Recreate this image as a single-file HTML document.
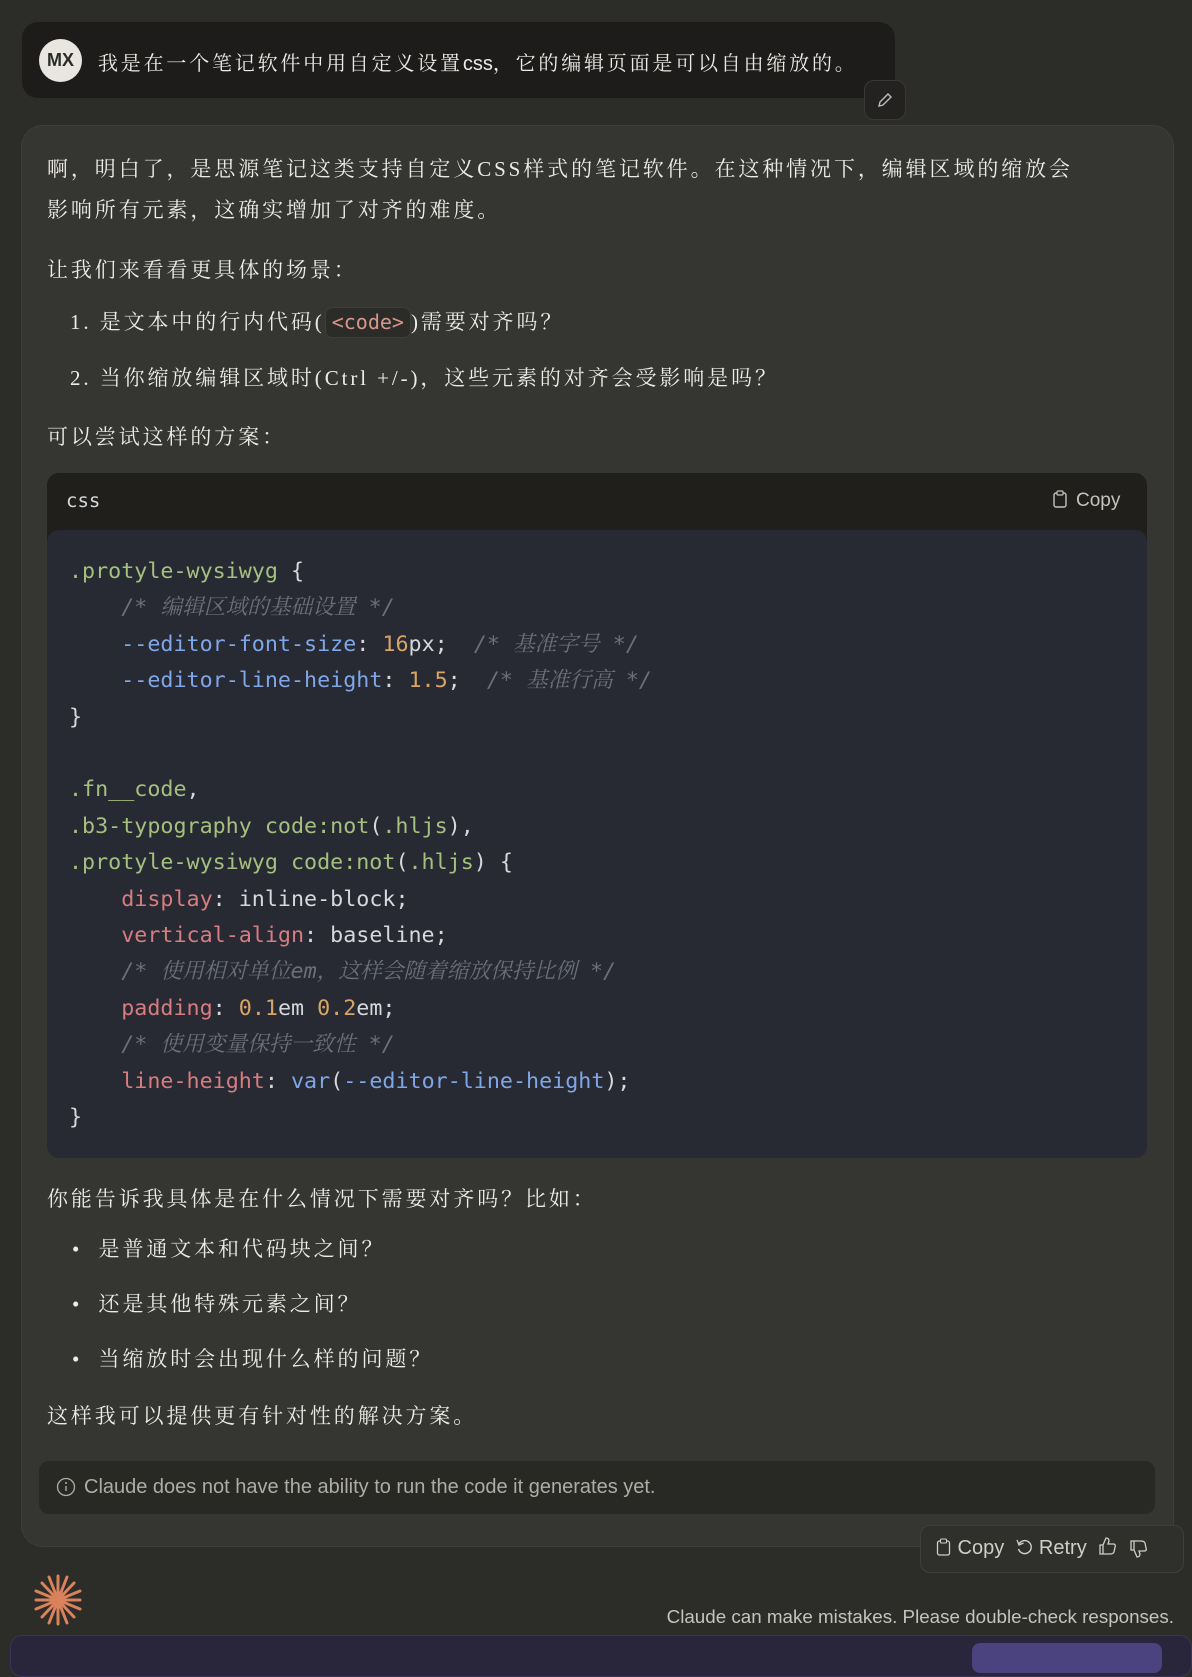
<!DOCTYPE html>
<html><head><meta charset="utf-8"><style>
body{margin:0;width:1192px;height:1650px;overflow:hidden;background:#2c2c29;font-family:"Liberation Serif","Noto Serif CJK SC",serif;color:#ecebe6;position:relative}
.a{position:absolute;white-space:nowrap}
.t{font-size:21px;letter-spacing:2.9px}
.user{position:absolute;left:22px;top:22px;width:873px;height:76px;background:#1d1c1a;border-radius:16px}
.av{position:absolute;left:39px;top:39px;width:43px;height:43px;border-radius:50%;background:#e8e6df;color:#2b2b28;font:bold 18px "Liberation Sans",sans-serif;text-align:center;line-height:43px}
.edit{position:absolute;left:864px;top:80px;width:40px;height:38px;border-radius:10px;background:#232220;border:1px solid #3a3936}
.card{position:absolute;left:21px;top:125px;width:1151px;height:1420px;background:#353532;border:1px solid #3e3e3a;border-radius:22px}
.ch{position:absolute;left:47px;top:473px;width:1100px;height:80px;background:#201f1c;border-radius:12px 12px 0 0}
.cb{position:absolute;left:47px;top:530px;width:1100px;height:628px;background:#282a33;border-radius:12px}
.m{font-family:"DejaVu Sans Mono","Liberation Mono",monospace;font-size:21.7px;color:#d6d8dc}
.m div{white-space:pre}
.g{color:#a4c07f}.b{color:#7fa6e6}.r{color:#d77c7f}.o{color:#d9a466}.c{color:#6b6f78;font-style:italic;font-family:"DejaVu Sans Mono","Noto Serif CJK SC",monospace}
.s{font-family:"Liberation Sans",sans-serif;letter-spacing:0}
</style></head><body>
<div class="user"></div>
<div class="av">MX</div>
<div class="a t" style="left:98px;top:47px;font-size:20px;letter-spacing:2.8px">我是在一个笔记软件中用自定义设置<span class="s">css</span>，它的编辑页面是可以自由缩放的。</div>
<div class="edit"><svg width="40" height="38" viewBox="0 0 40 38"><path d="M14 25 L15 21 L23 13 L26 16 L18 24 Z" fill="none" stroke="#bbb" stroke-width="1.4"/></svg></div>
<div class="card"></div>
<div class="a t" style="left:47px;top:153px">啊，明白了，是思源笔记这类支持自定义CSS样式的笔记软件。在这种情况下，编辑区域的缩放会</div>
<div class="a t" style="left:47px;top:194px">影响所有元素，这确实增加了对齐的难度。</div>
<div class="a t" style="left:47px;top:254px">让我们来看看更具体的场景：</div>
<div class="a t" style="left:70px;top:306px">1. 是文本中的行内代码(<span style="display:inline-block;background:#2b2b28;border:1px solid #3e3e3a;border-radius:7px;padding:0 6px;color:#d9958a;font-family:'DejaVu Sans Mono',monospace;font-size:20px;line-height:29px;letter-spacing:0">&lt;code&gt;</span>)需要对齐吗？</div>
<div class="a t" style="left:70px;top:362px">2. 当你缩放编辑区域时(Ctrl +/-)，这些元素的对齐会受影响是吗？</div>
<div class="a t" style="left:47px;top:421px">可以尝试这样的方案：</div>
<div class="ch"></div><div class="cb"></div>
<div class="a m" style="left:66px;top:490px;font-size:19px">css</div>
<div class="a s" style="left:1052px;top:490px;font-size:19px;color:#c5c3bc"><svg width="16" height="18" style="vertical-align:-2px;margin-right:8px"><rect x="2" y="3" width="12" height="14" rx="2" fill="none" stroke="#c5c3bc" stroke-width="1.4"/><rect x="5" y="1" width="6" height="4" rx="1" fill="#201f1c" stroke="#c5c3bc" stroke-width="1.2"/></svg>Copy</div>
<div class="a m" style="left:69px;top:554px;line-height:36.4px">
<div><span class="g">.protyle-wysiwyg</span> {</div>
<div>    <span class="c">/* 编辑区域的基础设置 */</span></div>
<div>    <span class="b">--editor-font-size</span>: <span class="o">16</span>px;  <span class="c">/* 基准字号 */</span></div>
<div>    <span class="b">--editor-line-height</span>: <span class="o">1.5</span>;  <span class="c">/* 基准行高 */</span></div>
<div>}</div>
<div> </div>
<div><span class="g">.fn__code</span>,</div>
<div><span class="g">.b3-typography code:not</span>(<span class="g">.hljs</span>),</div>
<div><span class="g">.protyle-wysiwyg code:not</span>(<span class="g">.hljs</span>) {</div>
<div>    <span class="r">display</span>: inline-block;</div>
<div>    <span class="r">vertical-align</span>: baseline;</div>
<div>    <span class="c">/* 使用相对单位em，这样会随着缩放保持比例 */</span></div>
<div>    <span class="r">padding</span>: <span class="o">0.1</span>em <span class="o">0.2</span>em;</div>
<div>    <span class="c">/* 使用变量保持一致性 */</span></div>
<div>    <span class="r">line-height</span>: <span class="b">var</span>(<span class="b">--editor-line-height</span>);</div>
<div>}</div>
</div>
<div class="a t" style="left:47px;top:1183px">你能告诉我具体是在什么情况下需要对齐吗？比如：</div>
<div class="a t" style="left:72px;top:1233px">•&nbsp;&nbsp;是普通文本和代码块之间？</div>
<div class="a t" style="left:72px;top:1288px">•&nbsp;&nbsp;还是其他特殊元素之间？</div>
<div class="a t" style="left:72px;top:1343px">•&nbsp;&nbsp;当缩放时会出现什么样的问题？</div>
<div class="a t" style="left:47px;top:1400px">这样我可以提供更有针对性的解决方案。</div>
<div style="position:absolute;left:39px;top:1461px;width:1116px;height:53px;background:#282825;border-radius:10px"></div>
<div class="a s" style="left:56px;top:1476px;font-size:20px;color:#aeaca5"><svg width="20" height="20" style="vertical-align:-4px;margin-right:8px"><circle cx="10" cy="10" r="8.5" fill="none" stroke="#aeaca5" stroke-width="1.3"/><line x1="10" y1="9" x2="10" y2="14" stroke="#aeaca5" stroke-width="1.4"/><circle cx="10" cy="6" r="1" fill="#aeaca5"/></svg>Claude does not have the ability to run the code it generates yet.</div>
<div style="position:absolute;left:920px;top:1525px;width:262px;height:46px;background:#2f2f2c;border:1px solid #3e3e3a;border-radius:10px"></div>
<div class="a s" style="left:936px;top:1536px;font-size:20px;color:#d0cec7">
<svg width="16" height="18" style="vertical-align:-2px"><rect x="1.5" y="3" width="12" height="14" rx="2" fill="none" stroke="#d0cec7" stroke-width="1.3"/><rect x="4.5" y="1" width="6" height="4" rx="1" fill="#2f2f2c" stroke="#d0cec7" stroke-width="1.1"/></svg> Copy&nbsp;
<svg width="18" height="18" style="vertical-align:-2px"><path d="M4 6 A6.5 6.5 0 1 1 3.5 11" fill="none" stroke="#d0cec7" stroke-width="1.4"/><path d="M2 2 L4 7 L8.5 5" fill="none" stroke="#d0cec7" stroke-width="1.3"/></svg> Retry&nbsp;
<svg width="20" height="20" style="vertical-align:-2px"><path d="M2 9 h3 v9 h-3z M5 9 L8 2 Q11 2 11 5 L10 8 H16 Q18 9 17 11 L16 16 Q15 18 12 18 H5" fill="none" stroke="#d0cec7" stroke-width="1.3"/></svg>&nbsp;
<svg width="20" height="20" style="vertical-align:-5px"><path d="M2 11 h3 v-9 h-3z M5 11 L8 18 Q11 18 11 15 L10 12 H16 Q18 11 17 9 L16 4 Q15 2 12 2 H5" fill="none" stroke="#d0cec7" stroke-width="1.3"/></svg></div>
<svg class="a" style="left:32px;top:1573px" width="52" height="54" viewBox="0 0 52 54"><g stroke="#d9825b" stroke-width="3" stroke-linecap="round"><line x1="26" y1="3" x2="26" y2="51"/><line x1="4" y1="27" x2="48" y2="27"/><line x1="10" y1="10" x2="42" y2="44"/><line x1="42" y1="10" x2="10" y2="44"/><line x1="17" y1="4" x2="35" y2="50"/><line x1="35" y1="4" x2="17" y2="50"/><line x1="4" y1="18" x2="48" y2="36"/><line x1="4" y1="36" x2="48" y2="18"/></g></svg>
<div class="a s" style="right:18px;top:1606px;font-size:18.8px;color:#c5c3bc">Claude can make mistakes. Please double-check responses.</div>
<div style="position:absolute;left:10px;top:1635px;width:1180px;height:40px;background:#29263b;border:1px solid #3a3556;border-radius:12px"></div>
<div style="position:absolute;left:972px;top:1643px;width:190px;height:30px;background:#4b4380;border-radius:8px"></div>
</body></html>
